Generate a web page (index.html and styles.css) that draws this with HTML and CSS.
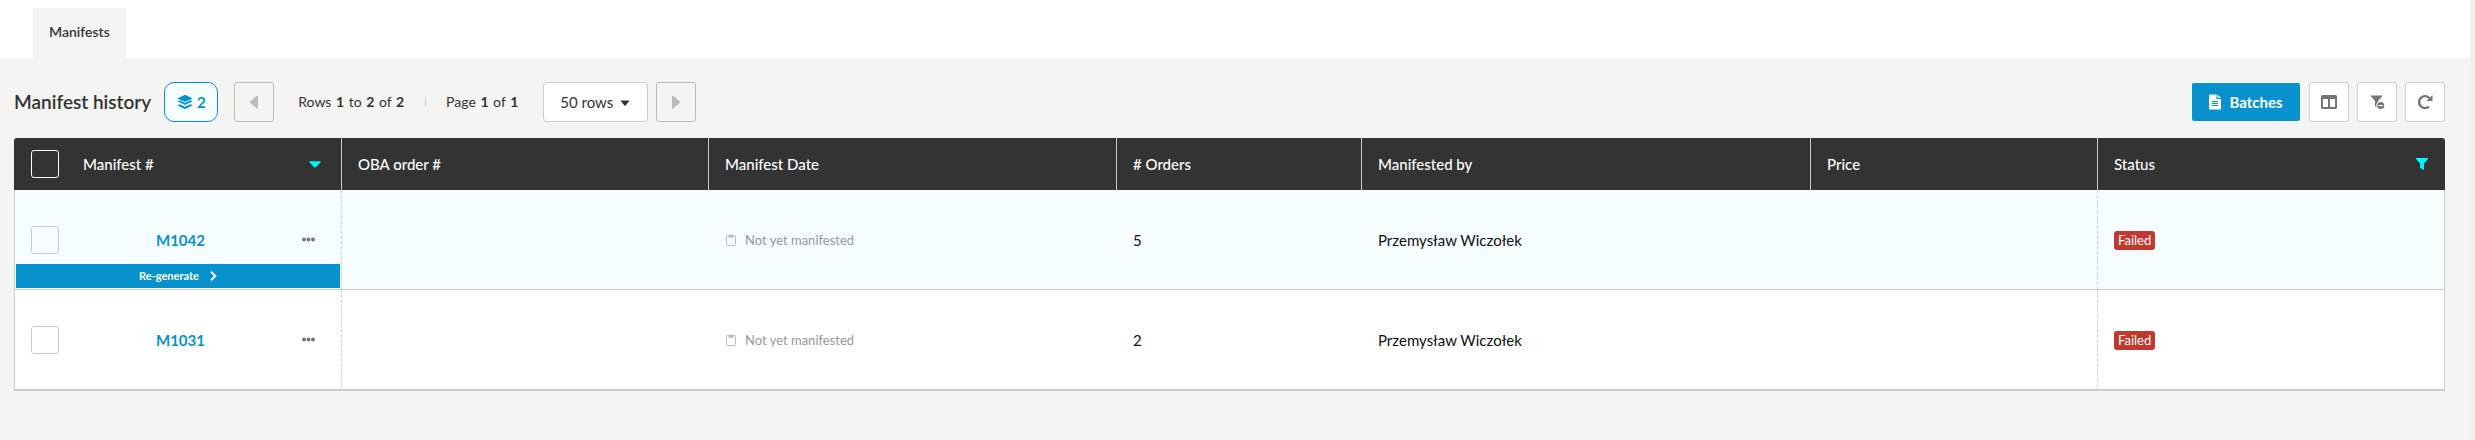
FILE: index.html
```html
<!DOCTYPE html>
<html lang="en">
<head>
<meta charset="utf-8">
<title>Manifest history</title>
<link rel="stylesheet" href="styles.css">
</head>
<body>
<div class="page">
  <nav class="tabs" aria-label="Sections"><a class="tab" href="#manifests">Manifests</a></nav>
  <main class="content" id="manifests">
    <header class="toolbar">
      <h1 class="title">Manifest history</h1>
      <button class="count" type="button" aria-label="2 layers">
        <svg width="16" height="16" viewBox="0 0 16 16" fill="currentColor" aria-hidden="true"><path d="M8 .8 15.6 4.4 8 8 .4 4.4z"/><path d="M.4 7.3 2.6 6.3 8 8.9l5.4-2.6 2.2 1L8 11z"/><path d="M.4 11.2 2.6 10.2 8 12.8l5.4-2.6 2.2 1L8 15.3z"/></svg>
        <span>2</span>
      </button>
      <button class="square pager" type="button" aria-label="Previous page" disabled>
        <svg width="10" height="14" viewBox="0 0 10 14" fill="currentColor" aria-hidden="true"><path d="M8.4.4A1 1 0 0 1 9 1v12a.8.8 0 0 1-1.3.6L1.300 7.700a1 1 0 0 1 0-1.400z"/></svg>
      </button>
      <p class="range">Rows <b>1</b> to <b>2</b> of <b>2</b></p>
      <span class="divider"></span>
      <p class="pages">Page <b>1</b> of <b>1</b></p>
      <div class="select-wrap">
        <select class="rows-select" aria-label="Rows per page"><option>50 rows</option><option>100 rows</option></select>
        <svg class="caret" width="10" height="6" viewBox="0 0 10 6" fill="currentColor" aria-hidden="true"><path d="M.4.4h9.200L5.600 5.400a.8.8 0 0 1-1.200 0z"/></svg>
      </div>
      <button class="square pager pager-next" type="button" aria-label="Next page" disabled>
        <svg width="10" height="14" viewBox="0 0 10 14" fill="currentColor" aria-hidden="true"><path d="M1.600.4A1 1 0 0 0 1 1v12a.8.8 0 0 0 1.300.6l6.400-5.900a1 1 0 0 0 0-1.400z"/></svg>
      </button>
      <div class="actions">
        <button class="batches" type="button">
          <svg width="12" height="16" viewBox="0 0 12 16" aria-hidden="true"><path fill="currentColor" d="M1 .5h6.500V5H12v9.500a1 1 0 0 1-1 1H1a1 1 0 0 1-1-1v-13a1 1 0 0 1 1-1zM8.500.5 12 4H8.500z"/><path stroke="#0892cd" d="M3 7.500h6M3 9.500h6M3 11.500h6"/></svg>
          <span>Batches</span>
        </button>
        <button class="square tool" type="button" aria-label="Columns">
          <svg width="16" height="14" viewBox="0 0 16 14" aria-hidden="true"><path fill="currentColor" fill-rule="evenodd" d="M1.500 0h13A1.500 1.500 0 0 1 16 1.500v11a1.500 1.500 0 0 1-1.500 1.500h-13A1.500 1.500 0 0 1 0 12.500v-11A1.500 1.500 0 0 1 1.500 0zM2 4v8h5V4zm7 0v8h5V4z"/></svg>
        </button>
        <button class="square tool" type="button" aria-label="Clear filters">
          <svg width="16" height="16" viewBox="0 0 16 16" aria-hidden="true"><path fill="currentColor" d="M1.200 1.500h12.600L9 7v7.500L6 12V7z"/><circle cx="11.700" cy="11.500" r="4.500" fill="#fff"/><circle cx="11.700" cy="11.500" r="3.500" fill="currentColor"/><path stroke="#fff" stroke-width="1.200" d="M9.600 11.500h4.200"/></svg>
        </button>
        <button class="square tool" type="button" aria-label="Refresh">
          <svg width="16" height="16" viewBox="0 0 16 16" aria-hidden="true"><path fill="none" stroke="currentColor" stroke-width="2.400" d="M12.600 4.200A6 6 0 1 0 12 12.700"/><path fill="currentColor" d="M15.500 1v6H9.500z"/></svg>
        </button>
      </div>
    </header>
    <table class="grid">
      <colgroup><col class="c-manifest"><col class="c-oba"><col class="c-date"><col class="c-orders"><col class="c-by"><col class="c-price"><col class="c-status"></colgroup>
      <thead>
        <tr>
          <th scope="col"><div class="head-cell"><input class="check check-dark" type="checkbox" aria-label="Select all"><span>Manifest #</span><svg class="head-icon" width="12" height="7" viewBox="0 0 12 7" fill="currentColor" aria-hidden="true"><path d="M.8.200h10.400a.6.6 0 0 1 .4 1L6.800 6.300a1.100 1.100 0 0 1-1.600 0L.4 1.200a.6.6 0 0 1 .4-1z"/></svg></div></th>
          <th scope="col">OBA order #</th>
          <th scope="col">Manifest Date</th>
          <th scope="col"># Orders</th>
          <th scope="col">Manifested by</th>
          <th scope="col">Price</th>
          <th scope="col"><div class="head-cell"><span>Status</span><svg class="head-icon" width="12" height="12" viewBox="0 0 12 12" fill="currentColor" aria-hidden="true"><path d="M0 0h12v1L8 5.500V12l-4-2V5.500L0 1z"/></svg></div></th>
        </tr>
      </thead>
      <tbody>
        <tr class="active">
          <td class="dashed first">
            <div class="row-head"><input class="check" type="checkbox" aria-label="Select M1042"><a class="link" href="#m1042">M1042</a><button class="more" type="button" aria-label="More actions for M1042"><svg width="13" height="5" viewBox="0 0 13 5" fill="currentColor" aria-hidden="true"><circle cx="2" cy="2.500" r="1.900"/><circle cx="6.500" cy="2.500" r="1.900"/><circle cx="11" cy="2.500" r="1.900"/></svg></button></div>
            <button class="regenerate" type="button"><span>Re-generate</span><svg width="7" height="10" viewBox="0 0 7 10" fill="none" stroke="currentColor" stroke-width="2" aria-hidden="true"><path d="M1 .8 5.300 5 1 9.200"/></svg></button>
          </td>
          <td></td>
          <td><span class="pending"><svg width="10" height="12" viewBox="0 0 10 12" aria-hidden="true"><rect x=".5" y="1.500" width="9" height="10" rx=".8" fill="none" stroke="currentColor"/><path fill="currentColor" d="M2.500 1.500h1.200a1.300 1.300 0 0 1 2.600 0h1.200v2.200h-5z"/></svg>Not yet manifested</span></td>
          <td>5</td>
          <td>Przemysław Wiczołek</td>
          <td class="dashed"></td>
          <td><span class="badge">Failed</span></td>
        </tr>
        <tr>
          <td class="dashed first">
            <div class="row-head"><input class="check" type="checkbox" aria-label="Select M1031"><a class="link" href="#m1031">M1031</a><button class="more" type="button" aria-label="More actions for M1031"><svg width="13" height="5" viewBox="0 0 13 5" fill="currentColor" aria-hidden="true"><circle cx="2" cy="2.500" r="1.900"/><circle cx="6.500" cy="2.500" r="1.900"/><circle cx="11" cy="2.500" r="1.900"/></svg></button></div>
          </td>
          <td></td>
          <td><span class="pending"><svg width="10" height="12" viewBox="0 0 10 12" aria-hidden="true"><rect x=".5" y="1.500" width="9" height="10" rx=".8" fill="none" stroke="currentColor"/><path fill="currentColor" d="M2.500 1.500h1.200a1.300 1.300 0 0 1 2.600 0h1.200v2.200h-5z"/></svg>Not yet manifested</span></td>
          <td>2</td>
          <td>Przemysław Wiczołek</td>
          <td class="dashed"></td>
          <td><span class="badge">Failed</span></td>
        </tr>
      </tbody>
    </table>
  </main>
</div>
</body>
</html>
```

FILE: styles.css
```css
* { box-sizing: border-box; }

body {
  margin: 0;
  background: #f0f0f1;
  color: #333;
  font: 15px/20px Lato, "Open Sans", sans-serif;
}

button, select, input { font: inherit; color: inherit; margin: 0; }
svg { display: block; flex: none; }

.page {
  min-height: 100vh;
  margin-right: 5px;
  background: #f4f4f2;
}

.tabs {
  display: flex;
  padding: 8px 33px 0;
  background: #fff;
}

.tab {
  padding: 14px 16px 16px;
  background: #f4f4f2;
  color: #333;
  font-size: 14px;
  font-weight: 600;
  text-decoration: none;
}

.content { padding: 24px 25px 24px 14px; }

.toolbar {
  display: flex;
  align-items: center;
  margin-bottom: 16px;
}

.title { margin: 0 13px 0 0; font-size: 19px; font-weight: 600; }

.count {
  display: flex;
  align-items: center;
  justify-content: center;
  gap: 4px;
  width: 54px;
  height: 40px;
  margin-right: 16px;
  padding: 0;
  border: 1px solid #0892cd;
  border-radius: 10px;
  background: #f5fdff;
  color: #0892cd;
  font-weight: 700;
}

.square {
  display: flex;
  align-items: center;
  justify-content: center;
  width: 40px;
  height: 40px;
  padding: 0;
  border: 1px solid #ccc;
  border-radius: 3px;
  background: #fff;
  color: #757575;
}

.pager { border-color: #bbb; background: transparent; color: #bbb; }

.range, .pages { margin: 0; font-size: 14px; }
.range { margin-left: 24px; }
.range b, .pages b { margin: 0 1px; }
.divider { width: 1px; height: 10px; margin: 0 20px; background: #ccc; }

.select-wrap { position: relative; margin: 0 8px 0 24px; }

.rows-select {
  width: 105px;
  height: 40px;
  padding: 0 16px;
  border: 1px solid #ccc;
  border-radius: 4px;
  background: #fff;
  appearance: none;
}

.caret { position: absolute; top: 18px; right: 18px; pointer-events: none; }

.actions { display: flex; align-items: center; gap: 8px; margin-left: auto; }

.batches {
  display: flex;
  align-items: center;
  justify-content: center;
  gap: 8px;
  width: 110px;
  height: 40px;
  padding: 0;
  border: 1px solid #fff;
  border-radius: 3px;
  background: #0892cd;
  color: #fff;
  font-weight: 700;
}

.grid {
  width: 100%;
  table-layout: fixed;
  border-collapse: separate;
  border-spacing: 0;
}

.c-manifest { width: 328px; }
.c-oba { width: 367px; }
.c-date { width: 408px; }
.c-orders { width: 245px; }
.c-by { width: 449px; }
.c-price { width: 287px; }
.c-status { width: 347px; }

th {
  height: 52px;
  padding: 0 16px;
  border-right: 1px solid #ccc;
  background: #333;
  color: #fff;
  font-weight: 500;
  text-align: left;
}

th:first-child { border-top-left-radius: 3px; }
th:last-child { border-right: 0; border-top-right-radius: 3px; }

.head-cell { display: flex; align-items: center; }
.head-cell .check { margin: 0 24px 0 1px; }
.head-icon { margin: 0 4px 0 auto; color: #00f6ff; }
th:last-child .head-icon { margin-right: 1px; }

td {
  height: 100px;
  padding: 0 16px;
  border-bottom: 1px solid #ccc;
  background: #fff;
  color: #111;
}

tbody tr:last-child td { height: 101px; border-bottom-width: 2px; }
td:first-child { border-left: 1px solid #ccc; }
td:last-child { border-right: 1px solid #ccc; }
.active td { background: #f5fdff; }
td.dashed { border-right: 1px dashed #ccc; }
.first { position: relative; }

.row-head { display: flex; align-items: center; }

.check {
  flex: none;
  width: 28px;
  height: 28px;
  border: 1px solid #ccc;
  border-radius: 3px;
  background: transparent;
  appearance: none;
}

.check-dark { border-color: #fff; }

.link {
  flex: 1;
  color: #0892cd;
  font-weight: 700;
  text-align: center;
  text-decoration: none;
}

.more { padding: 4px 10px 4px 0; border: 0; background: none; color: #757575; }

.regenerate {
  position: absolute;
  right: 1px;
  bottom: 1px;
  left: 1px;
  display: flex;
  align-items: center;
  justify-content: center;
  gap: 11px;
  height: 24px;
  padding: 0;
  border: 0;
  background: #0892cd;
  color: #fff;
  font-size: 11px;
  font-weight: 700;
}

.pending {
  display: flex;
  align-items: center;
  gap: 9px;
  padding-left: 1px;
  color: #999;
  font-size: 13px;
}

.pending svg { color: #bbb; }

.badge {
  display: inline-block;
  padding: 0 4px;
  border-radius: 3px;
  background: #c0392f;
  color: #fff;
  font-size: 13px;
  line-height: 19px;
}
```
